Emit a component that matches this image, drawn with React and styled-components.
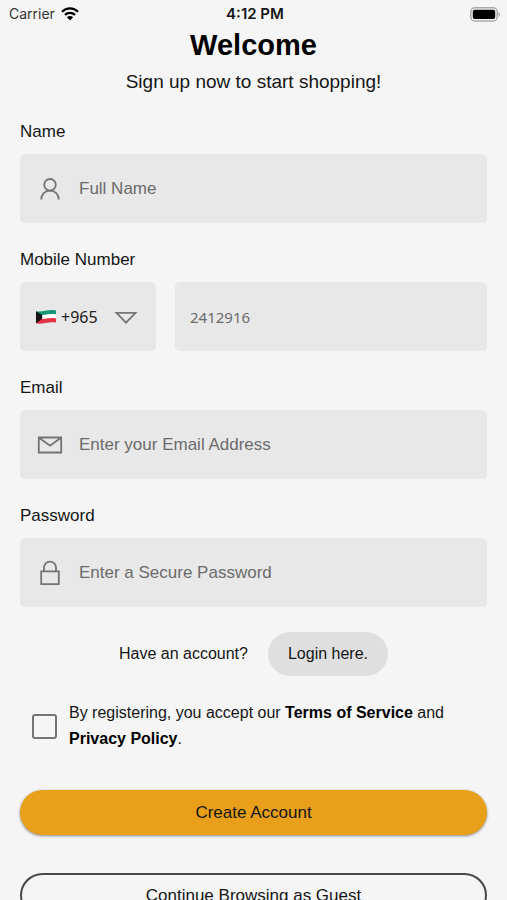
import React from "react";
import styled, { createGlobalStyle } from "styled-components";

const GlobalStyle = createGlobalStyle`
  *, *::before, *::after { box-sizing: border-box; }
  html { scrollbar-width: none; }
  body {
    margin: 0;
    background: #f5f5f5;
    color: #151515;
    font: 17px/24px "Liberation Sans", Arial, sans-serif;
  }
  button, input, select { font: inherit; color: inherit; }
`;

const StatusBar = styled.div`
  display: grid;
  grid-template-columns: 1fr auto 1fr;
  align-items: center;
  height: 28px;
  padding: 0 6px 0 9px;
  font: 14px/28px Inter, sans-serif;
`;

const Carrier = styled.span`
  display: flex;
  align-items: center;
  gap: 6px;
  color: #333;
`;

const Clock = styled.time`
  font-size: 15px;
  font-weight: 600;
`;

const BatteryIcon = styled.svg`
  justify-self: end;
`;

const Main = styled.main`
  padding: 0 20px 24px;
`;

const Heading = styled.header`
  text-align: center;
  margin-bottom: 26px;
`;

const Title = styled.h1`
  margin: 0;
  font-size: 29px;
  line-height: 34px;
  font-weight: 700;
  color: #000;
`;

const Subtitle = styled.p`
  margin: 8px 0 0;
  font-size: 19px;
`;

const Form = styled.form`
  display: flex;
  flex-direction: column;
`;

const Field = styled.div`
  display: flex;
  flex-direction: column;
  gap: 10px;
  margin-bottom: 25px;
`;

const Label = styled.label`
  align-self: flex-start;
`;

const InputBox = styled.div`
  display: flex;
  align-items: center;
  flex: ${({ $fixed }) => ($fixed ? "0 0 136px" : "1 1 auto")};
  gap: ${({ $fixed }) => ($fixed ? "4px" : "15px")};
  min-width: 0;
  height: 69px;
  padding: ${({ $fixed }) => ($fixed ? "0 18px 0 15px" : "0 15px")};
  border-radius: 5px;
  background: #e8e8e8;
  color: #666;
  svg { flex: none; }
`;

const TextInput = styled.input`
  flex: 1;
  min-width: 0;
  width: 100%;
  height: 100%;
  padding: 0;
  border: 0;
  background: transparent;
  color: #222;
  font-family: ${({ $numeric }) => ($numeric ? '"Noto Sans", sans-serif' : "inherit")};
  font-size: ${({ $numeric }) => ($numeric ? "15px" : "17px")};
  &::placeholder { color: #6b6b6b; opacity: 1; }
`;

const PhoneRow = styled.div`
  display: flex;
  gap: 19px;
`;

const CodeSelect = styled.select`
  appearance: none;
  flex: 1;
  min-width: 0;
  height: 100%;
  padding: 0;
  border: 0;
  background: transparent;
  color: #222;
  font: 16px/24px "Noto Sans", sans-serif;
`;

const LoginRow = styled.div`
  display: flex;
  align-items: center;
  justify-content: center;
  gap: 20px;
  font-size: 16px;
`;

const LoginLink = styled.a`
  padding: 10px 20px;
  border-radius: 22px;
  background: #dfdfdf;
  color: inherit;
  text-decoration: none;
`;

const Consent = styled.div`
  display: flex;
  align-items: center;
  gap: 12px;
  margin: 24px 0 38px;
  padding-left: 12px;
  font-size: 16px;
  line-height: 26px;
`;

const Checkbox = styled.input`
  appearance: none;
  flex: none;
  width: 25px;
  height: 25px;
  margin: 0;
  border: 2px solid #747474;
  border-radius: 3px;
  &:checked { background: #e8a01b; }
`;

const PolicyLink = styled.a`
  color: #000;
  font-weight: 700;
  text-decoration: none;
`;

const Button = styled.button`
  height: 45px;
  border-radius: 23px;
  border: ${({ $outlined }) => ($outlined ? "2px solid #484848" : "0")};
  background: ${({ $outlined }) => ($outlined ? "transparent" : "#e8a01b")};
  box-shadow: ${({ $outlined }) => ($outlined ? "none" : "0 1px 3px rgba(0, 0, 0, 0.45)")};
  & + & { margin-top: 38px; }
`;

const WifiIcon = () => (
  <svg width="18" height="14" viewBox="0 0 18 14" fill="none" aria-hidden="true">
    <path d="M1 4.8C5.4.2 12.6.2 17 4.8M4 7.9c2.8-2.8 7.2-2.8 10 0" stroke="#000" strokeWidth="2.3" />
    <path d="M5.9 10.2c1.8-1.7 4.4-1.7 6.2 0L9 13.5z" fill="#000" />
  </svg>
);

const Battery = () => (
  <BatteryIcon width="31" height="15" viewBox="0 0 31 15" aria-label="Battery full">
    <rect x=".8" y=".8" width="26.4" height="13.2" rx="4" fill="#f5f5f5" stroke="#aaa" strokeWidth="1.5" />
    <rect x="2.8" y="2.8" width="22.4" height="9.2" rx="2" fill="#000" />
    <path d="M28.5 5c2.2.8 2.2 4 0 4.8z" fill="#aaa" />
  </BatteryIcon>
);

const IconFrame = ({ children }) => (
  <svg width="29" height="30" viewBox="0 0 29 30" fill="none" stroke="#737373" strokeWidth="1.8" aria-hidden="true">
    {children}
  </svg>
);

const UserIcon = () => (
  <IconFrame>
    <circle cx="15" cy="10.8" r="5.8" />
    <path d="M6.2 25.5c.2-5.2 3.6-8.9 8.8-8.9s8.6 3.7 8.8 8.9" />
  </IconFrame>
);

const MailIcon = () => (
  <IconFrame>
    <path d="M3.8 7.5h22.4v15H3.8zM4 7.7l11 8 11-8" />
  </IconFrame>
);

const LockIcon = () => (
  <IconFrame>
    <path d="M6.2 13.3h17.6v12.8H6.2zM9 13.3V9.6a6 6 0 0 1 12 0v3.7" />
  </IconFrame>
);

const KuwaitFlag = () => (
  <svg width="22" height="16" viewBox="0 0 22 16" aria-hidden="true">
    <path d="M1 2.2c5 1.6 12-2.3 20-.7v4c-8-1.4-14 2-20 .7z" fill="#169875" />
    <path d="M1 6c6 1.4 12-2 20-.6v4.2c-8-1.3-15 1.8-20 .7z" fill="#fff" />
    <path d="M1 10.1c6 1.2 12-2.1 20-.7v4.1c-8-1.5-14 2.4-20 .8z" fill="#e33243" />
    <path d="M1 2.2l6.2 3.9v3.7L1 14.3z" fill="#171717" />
  </svg>
);

const ArrowDown = () => (
  <svg width="24" height="16" viewBox="0 0 24 16" fill="none" aria-hidden="true">
    <path d="M2.5 3.9h19L12 13.7z" stroke="#777" strokeWidth="1.8" />
  </svg>
);

function TextField({ id, label, icon, ...inputProps }) {
  return (
    <Field>
      <Label htmlFor={id}>{label}</Label>
      <InputBox>
        {icon}
        <TextInput id={id} {...inputProps} />
      </InputBox>
    </Field>
  );
}

export default function App() {
  return (
    <>
      <GlobalStyle />
      <StatusBar>
        <Carrier>Carrier <WifiIcon /></Carrier>
        <Clock>4:12 PM</Clock>
        <Battery />
      </StatusBar>
      <Main>
        <Heading>
          <Title>Welcome</Title>
          <Subtitle>Sign up now to start shopping!</Subtitle>
        </Heading>
        <Form onSubmit={(event) => event.preventDefault()}>
          <TextField id="name" label="Name" icon={<UserIcon />} placeholder="Full Name" />
          <Field>
            <Label htmlFor="mobile">Mobile Number</Label>
            <PhoneRow>
              <InputBox $fixed>
                <KuwaitFlag />
                <CodeSelect aria-label="Country code" defaultValue="+965">
                  <option>+965</option>
                </CodeSelect>
                <ArrowDown />
              </InputBox>
              <InputBox>
                <TextInput $numeric id="mobile" type="tel" placeholder="2412916" />
              </InputBox>
            </PhoneRow>
          </Field>
          <TextField id="email" label="Email" type="email" icon={<MailIcon />} placeholder="Enter your Email Address" />
          <TextField id="password" label="Password" type="password" icon={<LockIcon />} placeholder="Enter a Secure Password" />
          <LoginRow>
            <span>Have an account?</span>
            <LoginLink href="#login">Login here.</LoginLink>
          </LoginRow>
          <Consent>
            <Checkbox id="terms" type="checkbox" />
            <label htmlFor="terms">
              By registering, you accept our <PolicyLink href="#terms">Terms of Service</PolicyLink> and{" "}
              <PolicyLink href="#privacy">Privacy Policy</PolicyLink>.
            </label>
          </Consent>
          <Button type="submit">Create Account</Button>
          <Button type="button" $outlined>Continue Browsing as Guest</Button>
        </Form>
      </Main>
    </>
  );
}
